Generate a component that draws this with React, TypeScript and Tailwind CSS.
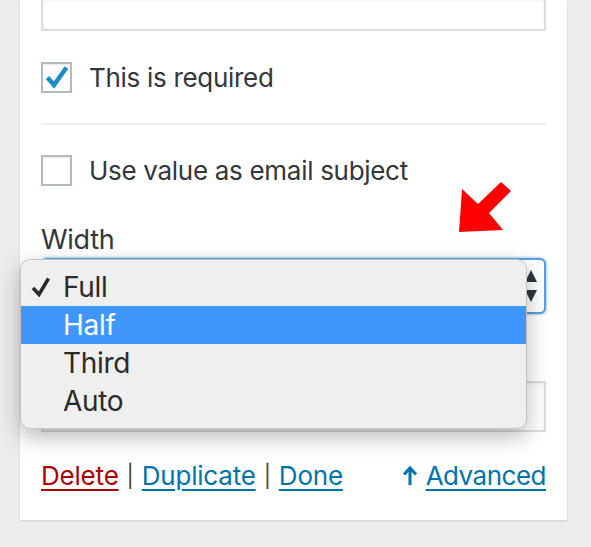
import React from "react";

const font = { fontFamily: "Inter, 'Noto Sans', sans-serif" };

const Checkbox = ({ checked }: { checked?: boolean }) => {
  return (
    <div className="relative w-[31px] h-[31px] shrink-0 border-2 border-[#b4b9be] bg-white shadow-[inset_0_1px_2px_rgba(0,0,0,0.1)]">
      {checked && (
        <svg className="absolute left-0 top-0" width="27" height="27" viewBox="0 0 27 27">
          <path d="M4.5 13.5 L11 21 L23.5 3.5" fill="none" stroke="#1e8cbe" strokeWidth="4.5" strokeLinejoin="miter" />
        </svg>
      )}
    </div>
  );
};

const options = ["Full", "Half", "Third", "Auto"];

export default function App() {
  const selected = "Full";
  const hover = "Half";

  return (
    <div className="min-h-[547px] w-[591px] bg-[#ececec] pl-[20px] pr-[24px] pb-[27px]" style={font}>
      <div className="relative w-[547px] bg-white px-[21px] pb-[26px] shadow-[0_1px_2px_rgba(0,0,0,0.12)] text-[#32373c]">
        {/* previous field */}
        <div className="h-[31px] border-2 border-t-0 border-[#dddddd] shadow-[inset_0_1px_3px_rgba(0,0,0,0.07)]" />

        <label className="mt-[31px] flex items-center gap-[17px] h-[31px]">
          <Checkbox checked />
          <span className="text-[26px] leading-none tracking-[-0.3px]">This is required</span>
        </label>

        <div className="mt-[30px] h-[2px] bg-[#eeeeee]" />

        <label className="mt-[30px] flex items-center gap-[17px] h-[31px]">
          <Checkbox />
          <span className="text-[26px] leading-none tracking-[-0.3px]">Use value as email subject</span>
        </label>

        <div className="mt-[37px] h-[34px] text-[27px] leading-[34px] tracking-[-0.3px]">Width</div>

        <div className="relative mt-[1px]">
          <div className="h-[56px] rounded-[6px] border-2 border-[#5b9dd9] bg-white shadow-[0_0_3px_rgba(30,140,190,0.7)] flex items-center justify-end pr-[6px]">
            <svg width="14" height="36" viewBox="0 0 14 36">
              <polygon points="7,2 13,14 1,14" fill="#32373c" />
              <polygon points="1,22 13,22 7,34" fill="#32373c" />
            </svg>
          </div>

          {/* open menu */}
          <div className="absolute left-[-21px] top-[1px] w-[507px] rounded-[10px] border border-[#c4c4c4] bg-[#efefef] py-[8px] shadow-[0_8px_22px_rgba(0,0,0,0.28)] z-10">
            {options.map((o) => (
              <div
                key={o}
                className={`relative h-[38px] flex items-center pl-[42px] text-[28px] leading-none tracking-[-0.3px] ${
                  o === hover ? "bg-[#3f97fd] text-white" : "text-[#2a2a2a]"
                }`}
              >
                {o === selected && (
                  <svg className="absolute left-[10px] top-[9px]" width="20" height="20" viewBox="0 0 20 20">
                    <path d="M2 11 L8 17.5 L17.5 1.5" fill="none" stroke="#2a2a2a" strokeWidth="3.5" />
                  </svg>
                )}
                {o}
              </div>
            ))}
          </div>
        </div>

        {/* next field, hidden under menu */}
        <div className="mt-[67px] h-[51px] border-2 border-[#dddddd] shadow-[inset_0_1px_3px_rgba(0,0,0,0.07)]" />

        <div className="mt-[26px] flex items-center justify-between h-[36px] text-[26px] leading-[36px] tracking-[-0.2px]">
          <div className="flex items-center gap-[8px]">
            <a href="#" className="text-[#aa0000] underline decoration-2 underline-offset-[4px]">Delete</a>
            <span className="text-[#444] text-[22px]">|</span>
            <a href="#" className="text-[#0073aa] underline decoration-2 underline-offset-[4px]">Duplicate</a>
            <span className="text-[#444] text-[22px]">|</span>
            <a href="#" className="text-[#0073aa] underline decoration-2 underline-offset-[4px]">Done</a>
          </div>
          <a href="#" className="flex items-center gap-[9px] text-[#0073aa]">
            <svg width="14" height="20" viewBox="0 0 14 20">
              <path d="M7 19 V3 M1 8.5 L7 2 L13 8.5" fill="none" stroke="#0073aa" strokeWidth="3" />
            </svg>
            <span className="underline decoration-2 underline-offset-[4px] tracking-[-0.5px]">Advanced</span>
          </a>
        </div>

        {/* red pointer arrow */}
        <svg className="absolute left-[435px] top-[178px]" width="60" height="60" viewBox="455 178 60 60">
          <polygon points="459,232 462,189 478,204 501,182 511,191 489,213 503,230" fill="#ff0000" />
        </svg>
      </div>
    </div>
  );
}
